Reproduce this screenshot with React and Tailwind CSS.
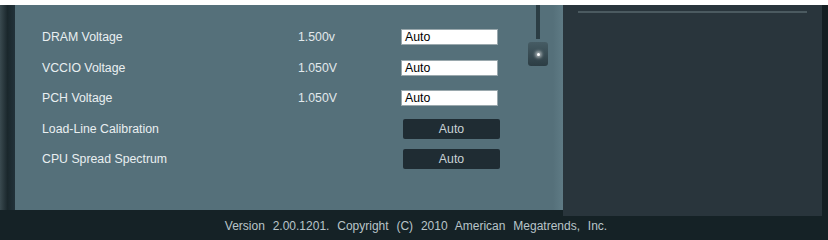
import React from 'react';

const rows = [
    { label: 'DRAM Voltage', value: '1.500v', kind: 'input' },
    { label: 'VCCIO Voltage', value: '1.050V', kind: 'input' },
    { label: 'PCH Voltage', value: '1.050V', kind: 'input' },
    { label: 'Load-Line Calibration', value: '', kind: 'button' },
    { label: 'CPU Spread Spectrum', value: '', kind: 'button' },
];

export default function App() {
    return (
        <div className="w-[828px] h-[240px] bg-[#152226] flex flex-col overflow-hidden font-['Liberation_Sans',Arial,sans-serif]">
            {/* top white strip */}
            <div className="h-[5px] bg-white shrink-0"></div>

            <div className="flex h-[205px] shrink-0">
                {/* left frame edge */}
                <div className="w-[15px] bg-gradient-to-r from-[#3a4a50] via-[#1a272c] to-[#22323a] shrink-0"></div>

                {/* settings panel */}
                <div className="w-[548px] bg-[#55707a] flex shrink-0">
                    <div className="flex-1 pt-[17px] pl-[27px]">
                        {rows.map((row) => (
                            <div key={row.label} className="h-[30.5px] flex items-center text-[12.3px] text-[#e9eff1]">
                                <span className="w-[256px]">{row.label}</span>
                                <span className="w-[103px] text-[#e2e9ec]">{row.value}</span>
                                {row.kind === 'input' ? (
                                    <div className="w-[97px] h-[16px] bg-white border border-[#9aa8ad] text-black pl-[3px] leading-[14px]">
                                        Auto
                                    </div>
                                ) : (
                                    <div className="ml-[2px] w-[97px] h-[20px] bg-[#1f2c33] rounded-[2px] text-[#c9d2d6] flex items-center justify-center">
                                        Auto
                                    </div>
                                )}
                            </div>
                        ))}
                    </div>

                    {/* scrollbar */}
                    <div className="w-[30px] flex flex-col items-center shrink-0">
                        <div className="w-[4px] h-[34px] bg-[#2b3d44]"></div>
                        <div className="mt-[3px] w-[20px] h-[24px] rounded-[3px] bg-gradient-to-b from-[#465c64] to-[#2c3d44] flex items-center justify-center">
                            <div className="w-[3px] h-[3px] rounded-full bg-white shadow-[0_0_3px_2px_rgba(255,255,255,0.5)]"></div>
                        </div>
                    </div>
                    <div className="w-[10px] bg-gradient-to-r from-[#55707a] to-[#5f7b85] shrink-0"></div>
                </div>

                {/* right panel */}
                <div className="w-[259px] bg-[#29353c] shrink-0 pt-[6px] px-[15px] h-[211px]">
                    <div className="h-[2px] bg-[#4b5a60]"></div>
                </div>

                <div className="flex-1 bg-[#141e22]"></div>
            </div>

            {/* footer */}
            <div className="flex-1 flex items-center justify-center pt-[2px] pl-[4px] text-[12px] text-[#b9c5c9] [word-spacing:4.5px]">
                Version 2.00.1201. Copyright (C) 2010 American Megatrends, Inc.
            </div>
        </div>
    );
}
